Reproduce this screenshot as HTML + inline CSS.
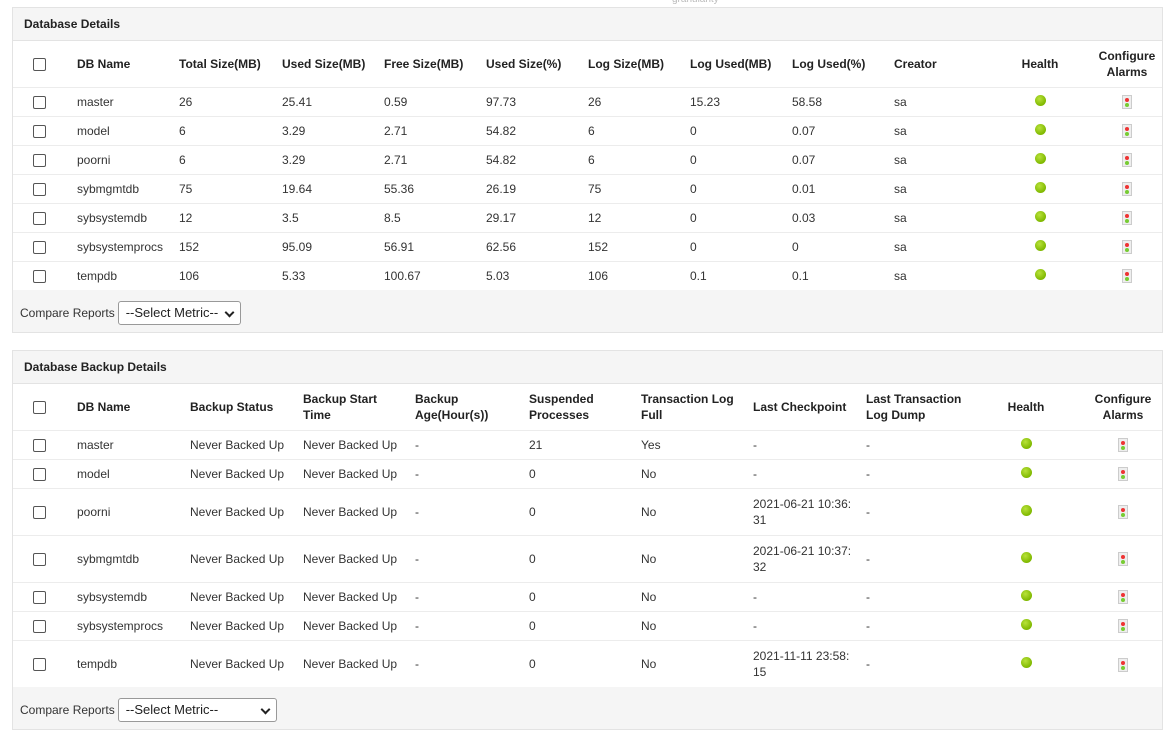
<!DOCTYPE html>
<html><head><meta charset="utf-8"><style>
*{box-sizing:border-box;margin:0;padding:0}
body{width:1175px;height:741px;background:#fff;font-family:"Liberation Sans",Arial,sans-serif;font-size:12px;color:#333;position:relative;overflow:hidden}
.top{position:absolute;left:672px;top:-6px;font-size:10px;color:#bbb}
.panel{position:absolute;left:12px;width:1151px;border:1px solid #e3e3e3;background:#f5f5f5}
.ph{height:33px;line-height:32px;padding-left:11px;font-weight:bold;color:#222;border-bottom:1px solid #e3e3e3}
table{border-collapse:collapse;table-layout:fixed;background:#fff;width:1149px}
td,th{padding:0;vertical-align:middle;text-align:left;border-bottom:1px solid #ececec}
th{font-weight:bold;color:#222;line-height:16px;height:46px}
tr.r td{height:29px}
tr.t td{height:47px;line-height:16px}
.cb{padding-left:20px}
.cb span{display:inline-block;width:13px;height:13px;border:1px solid #555;border-radius:2px;vertical-align:middle;background:#fff}
.c{text-align:center}
.dot{display:inline-block;width:11px;height:11px;border-radius:50%;background:radial-gradient(circle at 40% 35%,#b8e23a,#7fb800 70%);vertical-align:middle;position:relative;top:-2px}
.al{display:inline-block;width:10px;height:14px;border:1px solid #ccc;background:#eee;position:relative;vertical-align:middle}
.al:before{content:"";position:absolute;left:2px;top:2px;width:4px;height:4px;border-radius:50%;background:#e33}
.al:after{content:"";position:absolute;left:2px;top:7px;width:4px;height:4px;border-radius:50%;background:#7c3}
.ft{height:42px;display:flex;align-items:center;padding-left:7px;padding-top:3px;color:#333}
.sel{margin-left:3px;height:24px;border:1px solid #999;border-radius:3px;background:#fff;display:inline-flex;align-items:center;padding-left:7px;font-size:13px;color:#222;position:relative}
.sel:after{content:"";position:absolute;right:7px;top:7px;width:5px;height:5px;border-right:2px solid #222;border-bottom:2px solid #222;transform:rotate(45deg)}
</style></head><body>
<div class="top">granularity</div>

<div class="panel" style="top:7px;height:326px">
<div class="ph">Database Details</div>
<table>
<colgroup><col style="width:64px"><col style="width:102px"><col style="width:103px"><col style="width:102px"><col style="width:102px"><col style="width:102px"><col style="width:102px"><col style="width:102px"><col style="width:102px"><col style="width:106px"><col style="width:80px"><col style="width:82px"></colgroup>
<tr><th class="cb"><span></span></th><th>DB Name</th><th>Total Size(MB)</th><th>Used Size(MB)</th><th>Free Size(MB)</th><th>Used Size(%)</th><th>Log Size(MB)</th><th>Log Used(MB)</th><th>Log Used(%)</th><th>Creator</th><th class="c">Health</th><th class="c" style="padding-left:12px">Configure Alarms</th></tr>
<tr class="r"><td class="cb"><span></span></td><td>master</td><td>26</td><td>25.41</td><td>0.59</td><td>97.73</td><td>26</td><td>15.23</td><td>58.58</td><td>sa</td><td class="c"><i class="dot"></i></td><td class="c" style="padding-left:12px"><i class="al"></i></td></tr>
<tr class="r"><td class="cb"><span></span></td><td>model</td><td>6</td><td>3.29</td><td>2.71</td><td>54.82</td><td>6</td><td>0</td><td>0.07</td><td>sa</td><td class="c"><i class="dot"></i></td><td class="c" style="padding-left:12px"><i class="al"></i></td></tr>
<tr class="r"><td class="cb"><span></span></td><td>poorni</td><td>6</td><td>3.29</td><td>2.71</td><td>54.82</td><td>6</td><td>0</td><td>0.07</td><td>sa</td><td class="c"><i class="dot"></i></td><td class="c" style="padding-left:12px"><i class="al"></i></td></tr>
<tr class="r"><td class="cb"><span></span></td><td>sybmgmtdb</td><td>75</td><td>19.64</td><td>55.36</td><td>26.19</td><td>75</td><td>0</td><td>0.01</td><td>sa</td><td class="c"><i class="dot"></i></td><td class="c" style="padding-left:12px"><i class="al"></i></td></tr>
<tr class="r"><td class="cb"><span></span></td><td>sybsystemdb</td><td>12</td><td>3.5</td><td>8.5</td><td>29.17</td><td>12</td><td>0</td><td>0.03</td><td>sa</td><td class="c"><i class="dot"></i></td><td class="c" style="padding-left:12px"><i class="al"></i></td></tr>
<tr class="r"><td class="cb"><span></span></td><td>sybsystemprocs</td><td>152</td><td>95.09</td><td>56.91</td><td>62.56</td><td>152</td><td>0</td><td>0</td><td>sa</td><td class="c"><i class="dot"></i></td><td class="c" style="padding-left:12px"><i class="al"></i></td></tr>
<tr class="r"><td class="cb" style="border:0"><span></span></td><td style="border:0">tempdb</td><td style="border:0">106</td><td style="border:0">5.33</td><td style="border:0">100.67</td><td style="border:0">5.03</td><td style="border:0">106</td><td style="border:0">0.1</td><td style="border:0">0.1</td><td style="border:0">sa</td><td class="c" style="border:0"><i class="dot"></i></td><td class="c" style="padding-left:12px;border:0"><i class="al"></i></td></tr>
</table>
<div class="ft">Compare Reports<span class="sel" style="width:123px">--Select Metric--</span></div>
</div>

<div class="panel" style="top:350px;height:380px">
<div class="ph">Database Backup Details</div>
<table>
<colgroup><col style="width:64px"><col style="width:113px"><col style="width:113px"><col style="width:112px"><col style="width:114px"><col style="width:112px"><col style="width:112px"><col style="width:113px"><col style="width:120px"><col style="width:80px"><col style="width:96px"></colgroup>
<tr><th class="cb"><span></span></th><th>DB Name</th><th>Backup Status</th><th>Backup Start<br>Time</th><th>Backup<br>Age(Hour(s))</th><th>Suspended<br>Processes</th><th>Transaction Log<br>Full</th><th>Last Checkpoint</th><th>Last Transaction<br>Log Dump</th><th class="c">Health</th><th class="c" style="padding-left:18px">Configure<br>Alarms</th></tr>
<tr class="r"><td class="cb"><span></span></td><td>master</td><td>Never Backed Up</td><td>Never Backed Up</td><td>-</td><td>21</td><td>Yes</td><td>-</td><td>-</td><td class="c"><i class="dot"></i></td><td class="c" style="padding-left:18px"><i class="al"></i></td></tr>
<tr class="r"><td class="cb"><span></span></td><td>model</td><td>Never Backed Up</td><td>Never Backed Up</td><td>-</td><td>0</td><td>No</td><td>-</td><td>-</td><td class="c"><i class="dot"></i></td><td class="c" style="padding-left:18px"><i class="al"></i></td></tr>
<tr class="t"><td class="cb"><span></span></td><td>poorni</td><td>Never Backed Up</td><td>Never Backed Up</td><td>-</td><td>0</td><td>No</td><td>2021-06-21 10:36:<br>31</td><td>-</td><td class="c"><i class="dot"></i></td><td class="c" style="padding-left:18px"><i class="al"></i></td></tr>
<tr class="t"><td class="cb"><span></span></td><td>sybmgmtdb</td><td>Never Backed Up</td><td>Never Backed Up</td><td>-</td><td>0</td><td>No</td><td>2021-06-21 10:37:<br>32</td><td>-</td><td class="c"><i class="dot"></i></td><td class="c" style="padding-left:18px"><i class="al"></i></td></tr>
<tr class="r"><td class="cb"><span></span></td><td>sybsystemdb</td><td>Never Backed Up</td><td>Never Backed Up</td><td>-</td><td>0</td><td>No</td><td>-</td><td>-</td><td class="c"><i class="dot"></i></td><td class="c" style="padding-left:18px"><i class="al"></i></td></tr>
<tr class="r"><td class="cb"><span></span></td><td>sybsystemprocs</td><td>Never Backed Up</td><td>Never Backed Up</td><td>-</td><td>0</td><td>No</td><td>-</td><td>-</td><td class="c"><i class="dot"></i></td><td class="c" style="padding-left:18px"><i class="al"></i></td></tr>
<tr class="t"><td class="cb" style="border:0"><span></span></td><td style="border:0">tempdb</td><td style="border:0">Never Backed Up</td><td style="border:0">Never Backed Up</td><td style="border:0">-</td><td style="border:0">0</td><td style="border:0">No</td><td style="border:0">2021-11-11 23:58:<br>15</td><td style="border:0">-</td><td class="c" style="border:0"><i class="dot"></i></td><td class="c" style="padding-left:18px;border:0"><i class="al"></i></td></tr>
</table>
<div class="ft">Compare Reports<span class="sel" style="width:159px">--Select Metric--</span></div>
</div>
</body></html>
